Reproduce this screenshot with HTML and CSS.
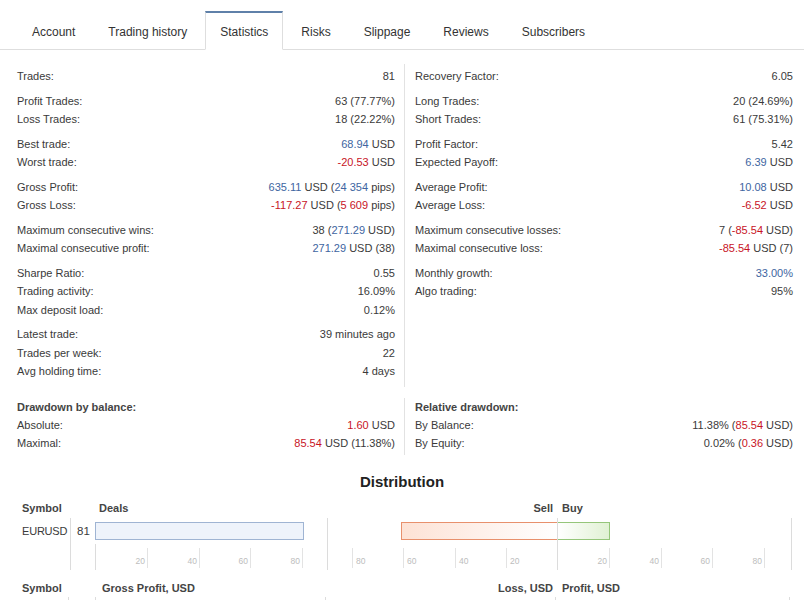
FILE: index.html
```html
<!DOCTYPE html>
<html>
<head>
<meta charset="utf-8">
<link rel="stylesheet" href="styles.css">
</head>
<body>
<nav class="tabs">
  <div class="tab">Account</div>
  <div class="tab">Trading history</div>
  <div class="tab active">Statistics</div>
  <div class="tab">Risks</div>
  <div class="tab">Slippage</div>
  <div class="tab">Reviews</div>
  <div class="tab">Subscribers</div>
</nav>

<section class="stats">
  <div class="col left">
    <div class="group">
      <div class="row"><span>Trades:</span><span>81</span></div>
    </div>
    <div class="group">
      <div class="row"><span>Profit Trades:</span><span>63 (77.77%)</span></div>
      <div class="row"><span>Loss Trades:</span><span>18 (22.22%)</span></div>
    </div>
    <div class="group">
      <div class="row"><span>Best trade:</span><span><b class="pos">68.94</b> USD</span></div>
      <div class="row"><span>Worst trade:</span><span><b class="neg">-20.53</b> USD</span></div>
    </div>
    <div class="group">
      <div class="row"><span>Gross Profit:</span><span><b class="pos">635.11</b> USD (<b class="pos">24 354</b> pips)</span></div>
      <div class="row"><span>Gross Loss:</span><span><b class="neg">-117.27</b> USD (<b class="neg">5 609</b> pips)</span></div>
    </div>
    <div class="group">
      <div class="row"><span>Maximum consecutive wins:</span><span>38 (<b class="pos">271.29</b> USD)</span></div>
      <div class="row"><span>Maximal consecutive profit:</span><span><b class="pos">271.29</b> USD (38)</span></div>
    </div>
    <div class="group">
      <div class="row"><span>Sharpe Ratio:</span><span>0.55</span></div>
      <div class="row"><span>Trading activity:</span><span>16.09%</span></div>
      <div class="row"><span>Max deposit load:</span><span>0.12%</span></div>
    </div>
    <div class="group">
      <div class="row"><span>Latest trade:</span><span>39 minutes ago</span></div>
      <div class="row"><span>Trades per week:</span><span>22</span></div>
      <div class="row"><span>Avg holding time:</span><span>4 days</span></div>
    </div>
  </div>
  <div class="col right">
    <div class="group">
      <div class="row"><span>Recovery Factor:</span><span>6.05</span></div>
    </div>
    <div class="group">
      <div class="row"><span>Long Trades:</span><span>20 (24.69%)</span></div>
      <div class="row"><span>Short Trades:</span><span>61 (75.31%)</span></div>
    </div>
    <div class="group">
      <div class="row"><span>Profit Factor:</span><span>5.42</span></div>
      <div class="row"><span>Expected Payoff:</span><span><b class="pos">6.39</b> USD</span></div>
    </div>
    <div class="group">
      <div class="row"><span>Average Profit:</span><span><b class="pos">10.08</b> USD</span></div>
      <div class="row"><span>Average Loss:</span><span><b class="neg">-6.52</b> USD</span></div>
    </div>
    <div class="group">
      <div class="row"><span>Maximum consecutive losses:</span><span>7 (<b class="neg">-85.54</b> USD)</span></div>
      <div class="row"><span>Maximal consecutive loss:</span><span><b class="neg">-85.54</b> USD (7)</span></div>
    </div>
    <div class="group">
      <div class="row"><span>Monthly growth:</span><span><b class="pos">33.00%</b></span></div>
      <div class="row"><span>Algo trading:</span><span>95%</span></div>
    </div>
  </div>
</section>

<section class="stats drawdown">
  <div class="col left">
    <div class="row head"><span>Drawdown by balance:</span></div>
    <div class="row"><span>Absolute:</span><span><b class="neg">1.60</b> USD</span></div>
    <div class="row"><span>Maximal:</span><span><b class="neg">85.54</b> USD (11.38%)</span></div>
  </div>
  <div class="col right">
    <div class="row head"><span>Relative drawdown:</span></div>
    <div class="row"><span>By Balance:</span><span>11.38% (<b class="neg">85.54</b> USD)</span></div>
    <div class="row"><span>By Equity:</span><span>0.02% (<b class="neg">0.36</b> USD)</span></div>
  </div>
</section>

<h2 class="dist-title">Distribution</h2>

<section class="dist">
  <div class="dhead">
    <div class="c-sym">Symbol</div>
    <div class="c-num"></div>
    <div class="c-deals">Deals</div>
    <div class="c-sb"><span class="lhalf">Sell</span><span class="rhalf">Buy</span></div>
  </div>
  <div class="drow">
    <div class="c-sym bordered">EURUSD</div>
    <div class="c-num">81</div>
    <div class="c-deals">
      <div class="barline"><div class="bar deals-bar" style="width:209px"></div></div>
      <div class="axis left-axis">
        <div class="tick" style="left:51px"><span class="lab-l">20</span></div>
        <div class="tick" style="left:103px"><span class="lab-l">40</span></div>
        <div class="tick" style="left:154px"><span class="lab-l">60</span></div>
        <div class="tick" style="left:206px"><span class="lab-l">80</span></div>
      </div>
    </div>
    <div class="c-sb canvas">
      <div class="center-line"></div>
      <div class="barline split">
        <div class="lhalf"><div class="bar sell-bar" style="width:157px"></div></div>
        <div class="rhalf"><div class="bar buy-bar" style="width:52px"></div></div>
      </div>
      <div class="axis">
        <div class="tick" style="left:24px"><span class="lab-r">80</span></div>
        <div class="tick" style="left:75px"><span class="lab-r">60</span></div>
        <div class="tick" style="left:127px"><span class="lab-r">40</span></div>
        <div class="tick" style="left:178px"><span class="lab-r">20</span></div>
        <div class="tick" style="left:281px"><span class="lab-l">20</span></div>
        <div class="tick" style="left:333px"><span class="lab-l">40</span></div>
        <div class="tick" style="left:384px"><span class="lab-l">60</span></div>
        <div class="tick" style="left:436px"><span class="lab-l">80</span></div>
      </div>
    </div>
  </div>

  <div class="dhead second">
    <div class="c-sym">Symbol</div>
    <div class="c-num"></div>
    <div class="c-deals gp">Gross Profit, USD</div>
    <div class="c-sb"><span class="lhalf">Loss, USD</span><span class="rhalf">Profit, USD</span></div>
  </div>
  <div class="drow stub">
    <div class="c-sym bordered"></div>
    <div class="c-num"></div>
    <div class="c-deals lined"></div>
    <div class="c-sb canvas"><div class="center-line"></div></div>
  </div>
</section>
</body>
</html>
```

FILE: styles.css
```css
* { box-sizing: border-box; }
html, body { margin: 0; padding: 0; background: #fff; }
body {
  font-family: "Liberation Sans", Arial, sans-serif;
  font-size: 11px;
  color: #3a3a3a;
  width: 804px;
  overflow: hidden;
}

/* Tabs */
.tabs {
  display: flex;
  gap: 3px;
  padding: 11px 0 0 17px;
  border-bottom: 1px solid #dedede;
  height: 50px;
}
.tab {
  font-size: 12px;
  color: #333;
  padding: 1px 15px 0;
  height: 38px;
  line-height: 36px;
  border-top: 2px solid transparent;
  white-space: nowrap;
}
.tab.active {
  background: #fff;
  border: 1px solid #dedede;
  border-top: 2px solid #5f80a9;
  border-bottom-color: #fff;
  height: 39px;
  line-height: 36px;
  padding: 1px 14px 0;
}

/* Stats */
.stats {
  display: grid;
  grid-template-columns: 387px 389px;
  padding-left: 17px;
  margin-top: 14px;
}
.col { padding-top: 3px; }
.col.left { padding-right: 9px; }
.col.right { border-left: 1px solid #e2e2e2; padding-left: 10px; }
.group { margin-bottom: 6px; }
.row {
  display: flex;
  justify-content: space-between;
  line-height: 18.5px;
  height: 18.5px;
  white-space: nowrap;
}
.row b { font-weight: normal; }
.pos { color: #4065a1; }
.neg { color: #c8141f; }
.row.head span { font-weight: bold; color: #444; }

.drawdown { margin-top: 11px; }
.drawdown .col { padding-top: 0; padding-bottom: 3px; }
.drawdown .row { height: 18px; line-height: 18px; }

/* Distribution */
.dist-title {
  margin: 17px 0 0;
  text-align: center;
  font-size: 15px;
  line-height: 20px;
  font-weight: bold;
  color: #222;
}
.dist {
  padding-left: 17px;
  margin-top: 8px;
}
.dhead, .drow { display: flex; }
.dhead {
  height: 16px;
  line-height: 16px;
  font-weight: bold;
  color: #444;
}
.dhead.second { margin-top: 10px; }
.c-sym { width: 54px; padding-left: 5px; }
.c-num { width: 24px; padding-left: 6px; }
.c-deals { width: 232px; padding-left: 4px; }
.c-deals.gp { padding-left: 7px; }
.c-sb { width: 465px; display: flex; }
.dhead .c-sb .lhalf { width: 230px; text-align: right; padding-right: 4px; }
.dhead .c-sb .rhalf { padding-left: 5px; }

.drow {
  margin-top: 2px;
  height: 52px;
}
.drow .c-sym, .drow .c-num { line-height: 26px; font-size: 11.5px; }
.drow .c-sym { font-size: 11px; letter-spacing: -0.2px; }
.bordered { border-right: 1px solid #dcdcdc; }
.drow .c-deals { padding-left: 0; }
.drow .c-sb { border-left: 1px solid #dcdcdc; border-right: 1px solid #dcdcdc; position: relative; flex-direction: column; }

.barline { height: 26px; padding-top: 4px; }
.bar { height: 18px; }
.deals-bar { background: #eef3fb; border: 1px solid #9fb4d3; }
.split { display: flex; }
.split .lhalf { width: 230px; display: flex; justify-content: flex-end; }
.split .rhalf { flex: 1; }
.sell-bar {
  border: 1px solid #e8906c;
  border-right: none;
  background: linear-gradient(to right, #fde2d5, #ffffff);
}
.buy-bar {
  border: 1px solid #95c67a;
  border-left: none;
  background: linear-gradient(to right, #ffffff, #e0f1d3);
}
.center-line {
  position: absolute;
  left: 229px;
  top: 0;
  bottom: 0;
  width: 1px;
  background: #dcdcdc;
}

.axis { position: relative; height: 26px; }
.left-axis { border-left: 1px solid #dcdcdc; }
.tick {
  position: absolute;
  top: 4px;
  width: 1px;
  height: 20px;
  background: #e3e3e3;
}
.tick span {
  position: absolute;
  bottom: 2px;
  font-size: 8.5px;
  color: #bdbdbd;
  line-height: 10px;
}
.lab-l { right: 3px; }
.lab-r { left: 4px; }

.drow.stub { height: 4px; margin-top: 1px; }
.drow.stub .c-sym { width: 52px; }
.lined { border-left: 1px solid #dcdcdc; margin-left: 2px; width: 230px; }
```
